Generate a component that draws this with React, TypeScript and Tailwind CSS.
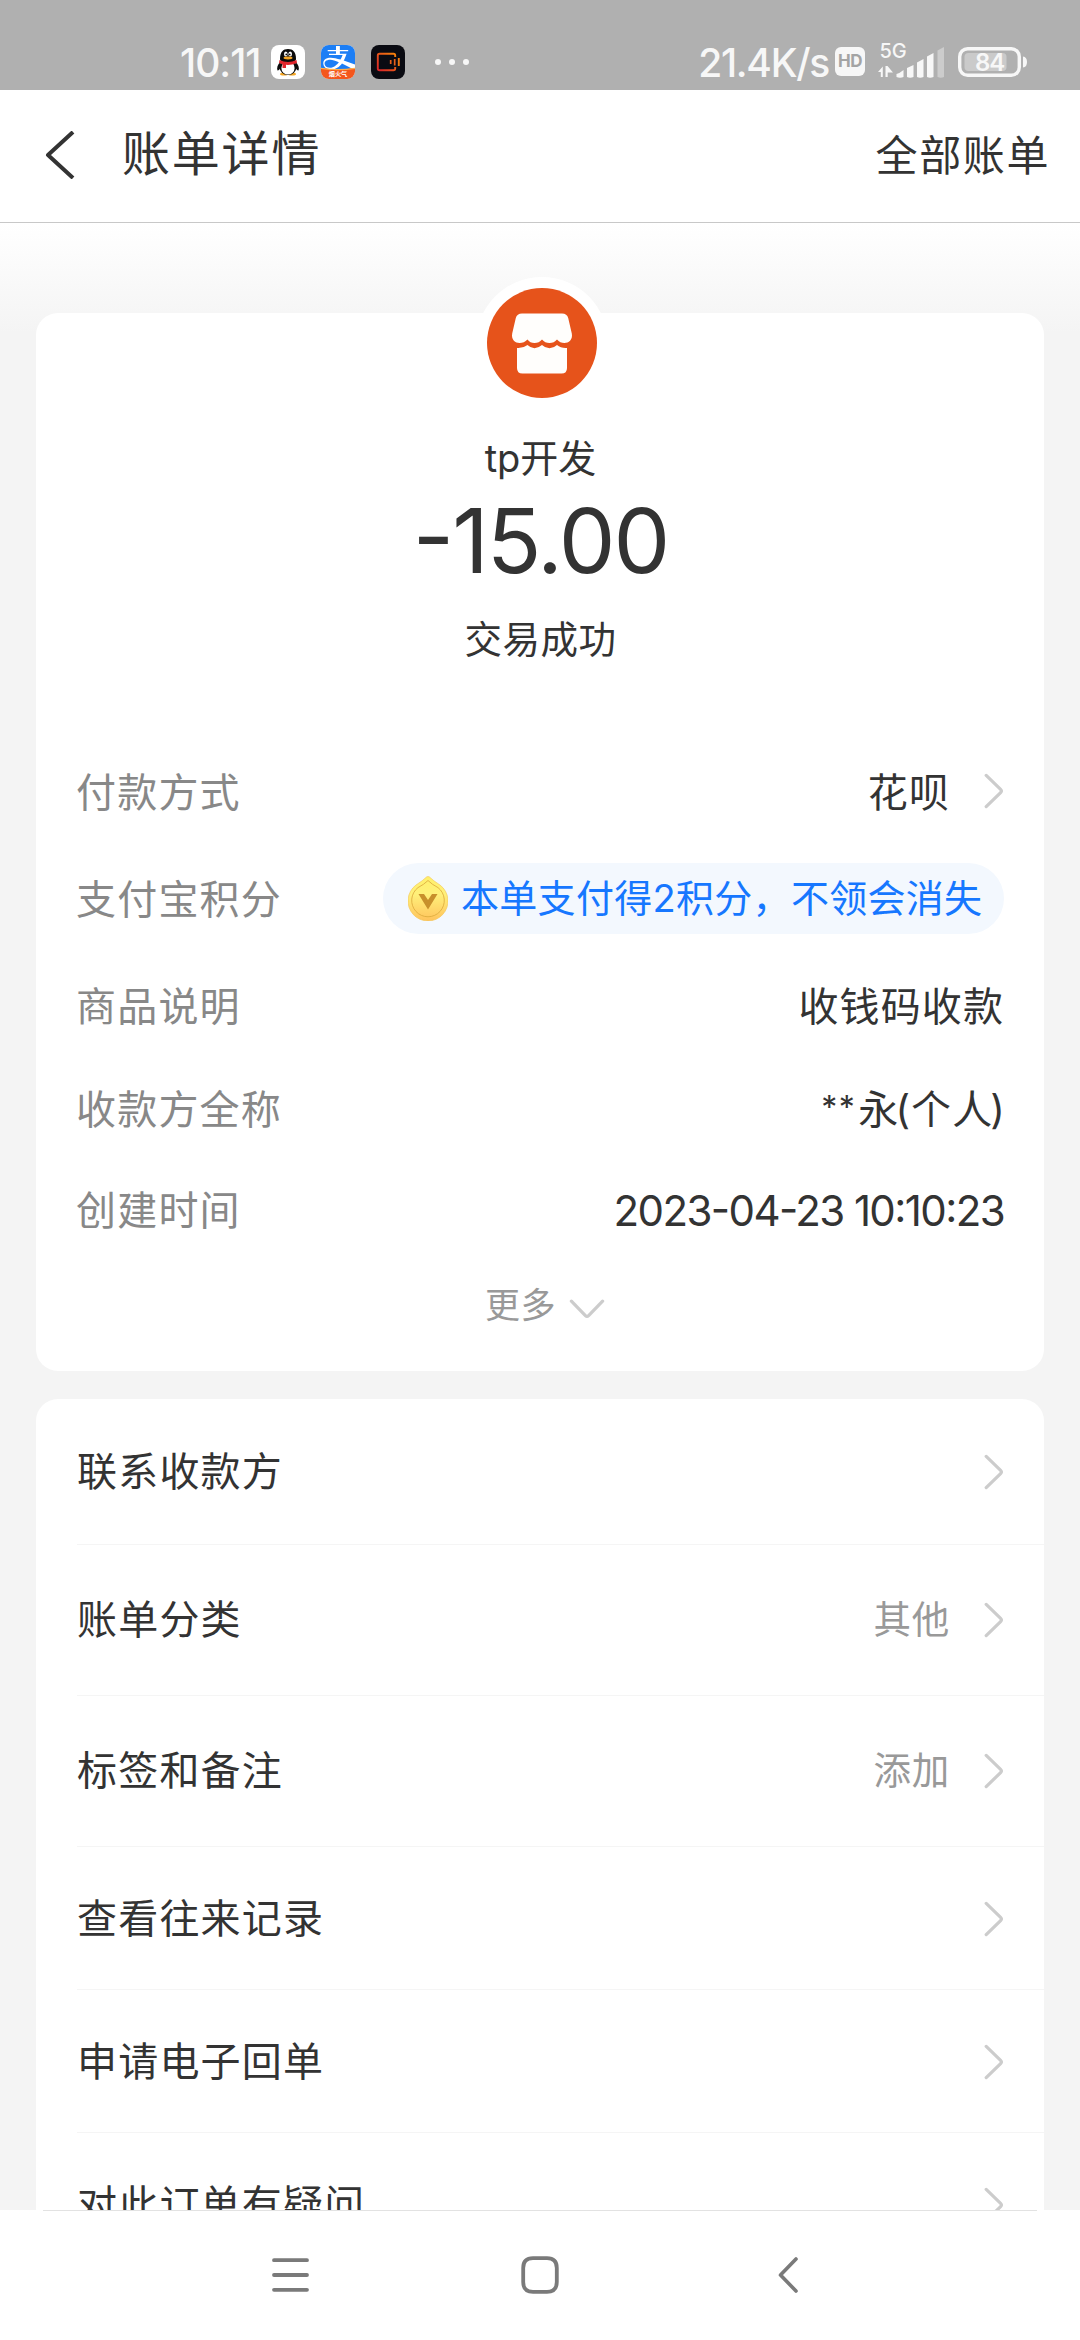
import React from 'react';
import { FaAlipay } from 'react-icons/fa';

interface DetailRowProps {
  label: string;
  height: string;
  children: React.ReactNode;
}

interface MenuItem {
  label: string;
  value?: string;
  height: string;
}

const menuItems: MenuItem[] = [
  { label: '联系收款方', height: 'h-[146px]' },
  { label: '账单分类', value: '其他', height: 'h-[151px]' },
  { label: '标签和备注', value: '添加', height: 'h-[151px]' },
  { label: '查看往来记录', height: 'h-[143px] pt-[2px]' },
  { label: '申请电子回单', height: 'h-[143px] pt-[2px]' },
  { label: '对此订单有疑问', height: 'h-[143px] pt-[2px]' },
];

const ChevronRight: React.FC = () => (
  <svg className="w-5 h-9 shrink-0" fill="none" stroke="#cccccc" viewBox="0 0 20 36">
    <path strokeLinecap="round" strokeLinejoin="round" strokeWidth="3.2" d="M2.2 2.4L16.6 16.4Q18.2 18 16.6 19.6L2.2 33.6" />
  </svg>
);

const QQIcon: React.FC = () => (
  <svg className="w-[34px] h-[34px]" viewBox="0 0 34 34">
    <rect width="34" height="34" rx="8" fill="#ffffff" />
    <ellipse cx="13" cy="29" rx="4" ry="1.6" fill="#f5a623" />
    <ellipse cx="21" cy="29" rx="4" ry="1.6" fill="#f5a623" />
    <path d="M9.5 17C6.5 19.5 5.5 23 6.5 25.5C8 25.5 9 24 9.5 22.5zM24.5 17C27.5 19.5 28.5 23 27.5 25.5C26 25.5 25 24 24.5 22.5z" fill="#0b0b0b" />
    <ellipse cx="17" cy="22" rx="8.5" ry="8" fill="#0b0b0b" />
    <ellipse cx="17" cy="23" rx="6.6" ry="6.6" fill="#ffffff" />
    <path d="M9 14C9 7 12 4 17 4S25 7 25 14C25 16.5 22 17.5 17 17.5S9 16.5 9 14z" fill="#0b0b0b" />
    <ellipse cx="14.8" cy="9" rx="1.8" ry="2.5" fill="#ffffff" />
    <ellipse cx="19.2" cy="9" rx="1.8" ry="2.5" fill="#ffffff" />
    <circle cx="15.3" cy="9.4" r="0.9" fill="#0b0b0b" />
    <circle cx="18.7" cy="9.4" r="0.9" fill="#0b0b0b" />
    <ellipse cx="17" cy="13" rx="4.5" ry="1.4" fill="#f5a623" />
    <path d="M8.5 15Q17 19 25.5 15L26 18Q20 20.3 15 19.8V23H11.5V19.3L8 18z" fill="#e0242b" />
  </svg>
);

const AlipayIcon: React.FC = () => (
  <div className="relative w-[34px] h-[34px] rounded-[8px] overflow-hidden bg-white">
    <FaAlipay className="absolute -top-[6px] left-0 w-[34px] h-[39px] text-[#1c7ef5]" />
    <svg className="absolute inset-0" viewBox="0 0 34 34">
      <path d="M0 23Q17 25.5 34 23V34H0z" fill="#f4561c" />
      <path d="M0 22.8Q17 25.3 34 22.8V24Q17 26.5 0 24z" fill="#ffb04a" />
      <text x="17" y="31" textAnchor="middle" fontSize="6.2" fontWeight="700" fill="#ffffff">烟火气</text>
    </svg>
  </div>
);

const RecorderIcon: React.FC = () => (
  <svg className="w-[34px] h-[34px]" fill="none" viewBox="0 0 34 34">
    <defs>
      <linearGradient id="recorder" x1="0" x2="1" y1="1" y2="0">
        <stop offset="0" stopColor="#d8232a" />
        <stop offset="1" stopColor="#f5820b" />
      </linearGradient>
    </defs>
    <rect width="34" height="34" rx="8" fill="#0a0b12" />
    <path d="M24.2 12V10.5Q24.2 8.8 22.5 8.8H8.5Q6.8 8.8 6.8 10.5V23.5Q6.8 25.2 8.5 25.2H22.5Q24.2 25.2 24.2 23.5V22" stroke="url(#recorder)" strokeWidth="1.9" />
    <path d="M19.7 15V19M23.7 14V20.5" stroke="#e9601a" strokeWidth="1.7" />
    <path d="M27.8 13V21" stroke="#f07a12" strokeWidth="1.9" />
  </svg>
);

const StatusBar: React.FC = () => (
  <div className="h-[90px] shrink-0 bg-[#b0b0b0] flex items-start pt-[43px] pl-[180px] pr-[52px] text-[#f7f7f7]">
    <span className="w-[91px] text-[39px] leading-[39px] font-medium tracking-[-1px]">10:11</span>
    <div className="flex gap-4 pt-[2px]">
      <QQIcon />
      <AlipayIcon />
      <RecorderIcon />
    </div>
    <div className="flex gap-2 pt-4 pl-[30px]">
      <span className="w-[6px] h-[6px] rounded-full bg-[#f7f7f7]" />
      <span className="w-[6px] h-[6px] rounded-full bg-[#f7f7f7]" />
      <span className="w-[6px] h-[6px] rounded-full bg-[#f7f7f7]" />
    </div>
    <span className="ml-auto text-[39px] leading-[39px] font-medium tracking-[-1.3px]">21.4K/s</span>
    <span className="mt-1 ml-[6px] w-[30px] h-[29px] rounded-[6px] bg-[#f7f7f7] text-[#a4a4a4] text-[17px] leading-[29px] tracking-[-0.5px] font-bold text-center">HD</span>
    {/* mobile signal */}
    <svg className="ml-[13px] -mt-[8px] w-[68px] h-[44px]" viewBox="0 -8 68 44">
      <text x="1.5" y="15" fontSize="20" fontWeight="500" fill="#f7f7f7">5G</text>
      <path d="M0 29L4.8 23.5V34H2.8V29zM7.5 34V23H9.5L15 29.5H9.7V34z" fill="#f7f7f7" />
      <path d="M18.5 34V31Q22 30 25.5 27V34Q22 35.5 18.5 34z" fill="#f7f7f7" />
      <path d="M29 34V25L35.5 22V34Q32 35.5 29 34zM39 34V19.5L45.5 16V34Q42 35.5 39 34zM49 34V13.5L55.5 10V34Q52 35.5 49 34z" fill="#f7f7f7" />
      <path d="M59.5 34V7.5L66 4V34Q63 35.5 59.5 34z" fill="#cccccc" />
    </svg>
    {/* battery */}
    <svg className="ml-3 w-[70px] h-[36px]" viewBox="0 0 70 36">
      <rect x="1.7" y="5.7" width="59.6" height="26.6" rx="8" fill="none" stroke="#f7f7f7" strokeWidth="3.4" />
      <rect x="6.5" y="10" width="42" height="18" rx="4" fill="#cacaca" />
      <path d="M65 13.5Q69 14 69 19T65 24.5z" fill="#f7f7f7" />
      <text x="31.5" y="28" textAnchor="middle" fontSize="24" fontWeight="600" letterSpacing="-1.2" fill="#f7f7f7">84</text>
    </svg>
  </div>
);

const DetailRow: React.FC<DetailRowProps> = ({ label, height, children }) => (
  <div className={`${height} flex items-center justify-between pt-[2px]`}>
    <span className="text-[40px] tracking-[1.2px] text-[#888888]">{label}</span>
    <div className="flex items-center text-[40px] tracking-[1.1px]">{children}</div>
  </div>
);

const PointsPill: React.FC = () => (
  <div className="h-[71px] w-[621px] mb-[2px] rounded-full bg-[#f3f8fe] flex items-center pl-[25px]">
    <svg className="w-10 h-[45px]" viewBox="0 0 40 45">
      <defs>
        <linearGradient id="coin" x1="0" x2="0" y1="0" y2="1">
          <stop offset="0" stopColor="#fff06a" />
          <stop offset="0.4" stopColor="#fff07a" />
          <stop offset="1" stopColor="#ffc35c" />
        </linearGradient>
      </defs>
      <path d="M18.5 1Q20 0 21.5 1Q25 4.5 32 9A20 20 0 1 1 8 9Q15 4.5 18.5 1z" fill="url(#coin)" stroke="#f3c450" strokeWidth="0.6" />
      <path d="M20 4.5Q24 8.5 30 11.6A16.3 16.3 0 1 1 10 11.6Q16 8.5 20 4.5z" fill="none" stroke="#dfae3f" strokeWidth="0.9" />
      <path d="M10.5 18H16L20 24L24 18H29.5L20 33.5z" fill="#c8902c" />
    </svg>
    <span className="ml-[13px] text-[38px] leading-[56px] tracking-[0.3px] text-[#1677ff] whitespace-nowrap pb-[2px]">
      本单支付得2积分，不领会消失
    </span>
  </div>
);

const App: React.FC = () => {
  return (
    <div className="w-[1080px] h-[2340px] flex flex-col overflow-hidden bg-white text-[#333333] font-['Inter','Noto_Sans_CJK_SC',sans-serif]">
      <StatusBar />

      {/* Title bar */}
      <header className="h-[133px] shrink-0 border-b border-[#c8c8c8] flex items-center pl-[45px] pr-[30px]">
        <svg className="w-[30px] h-[48px] mb-[2px]" fill="none" stroke="currentColor" viewBox="0 0 30 48">
          <path strokeLinejoin="round" strokeWidth="4" d="M28 1L3 24L28 47" />
        </svg>
        <h1 className="ml-[47px] text-[48px] tracking-[1.8px] pb-[5px]">账单详情</h1>
        <span className="ml-auto text-[42px] tracking-[1.6px] pb-[2px]">全部账单</span>
      </header>

      <main className="flex-1 min-h-0 overflow-hidden bg-[#f4f4f4] bg-[linear-gradient(#ffffff,#f4f4f4_110px)] px-9 pt-[90px]">
        {/* Bill summary */}
        <section className="h-[1058px] bg-white rounded-[22px] pl-10 pr-[40px]">
          <div className="h-[427px] flex flex-col items-center pl-px">
            <div className="-mt-[36px] w-[132px] h-[132px] shrink-0 rounded-full bg-white p-[11px] ml-[2px]">
              <svg className="w-[110px] h-[110px]" viewBox="0 0 110 110">
                <circle cx="55" cy="55" r="55" fill="#e6531b" />
                <path d="M35 25.5H75Q80 25.5 81.2 30L84.8 45.5C86 52 81.5 55 77.5 55Q73 55 70 51.5Q67 55 62.5 55T55 51.5Q52 55 47.5 55T40.5 51.5Q37 55 32.5 55C28.5 55 24 52 25.2 45.5L28.8 30Q30 25.5 35 25.5z" fill="#fffefc" />
                <path d="M30 60Q36 60.5 40.5 57Q44 60.3 47.5 60.3T55 57Q58.5 60.3 62.5 60.3T70 57Q74 60.5 80 60V80Q80 85.5 74.5 85.5H35.5Q30 85.5 30 80z" fill="#fffefc" />
              </svg>
            </div>
            <div className="mt-[24px] h-[50px] text-[38px] leading-[50px]">tp开发</div>
            <div className="mt-[8px] h-[100px] text-[90px] leading-[100px] tracking-[-2px] [font-feature-settings:'case']">-15.00</div>
            <div className="mt-[24px] h-[50px] text-[37.5px] leading-[50px] tracking-[0.5px]">交易成功</div>
          </div>

          <DetailRow label="付款方式" height="h-[104px]">
            <span>花呗</span>
            <span className="ml-[34px] mb-[5px]"><ChevronRight /></span>
          </DetailRow>
          <DetailRow label="支付宝积分" height="h-[109px]">
            <PointsPill />
          </DetailRow>
          <DetailRow label="商品说明" height="h-[106px]">收钱码收款</DetailRow>
          <DetailRow label="收款方全称" height="h-[99px]">
            <span className="text-[32px] tracking-[1.5px] mr-[2px] pb-1">**</span>
            <span>永</span>
            <span className="-ml-1">(</span>
            <span>个人</span>
            <span className="-ml-[3px] -mr-[2px]">)</span>
          </DetailRow>
          <DetailRow label="创建时间" height="h-[103px]">
            <span className="text-[42px] tracking-[-1.6px] [font-feature-settings:'case']">2023-04-23 10:10:23</span>
          </DetailRow>

          <div className="h-[89px] flex items-center justify-center pl-[10px] text-[35px] tracking-[0.5px] text-[#999999]">
            更多
            <svg className="ml-[13px] mt-[6px] w-9 h-5" fill="none" stroke="#cccccc" viewBox="0 0 36 20">
              <path strokeLinecap="round" strokeLinejoin="round" strokeWidth="3.2" d="M2.4 2.2L16.4 16.6Q18 18.2 19.6 16.6L33.6 2.2" />
            </svg>
          </div>
        </section>

        {/* Bill actions */}
        <section className="mt-7 bg-white rounded-t-[22px] pl-[41px]">
          {menuItems.map((item) => (
            <div
              key={item.label}
              className={`${item.height} border-b border-[#f5f5f5] flex items-center pr-10`}
            >
              <span className="text-[40px] tracking-[1.2px]">{item.label}</span>
              {item.value && (
                <span className="ml-auto mr-[34px] text-[37.5px] tracking-[0.8px] text-[#999999]">{item.value}</span>
              )}
              <span className={item.value ? '' : 'ml-auto'}><ChevronRight /></span>
            </div>
          ))}
        </section>
      </main>

      {/* System navigation */}
      <nav className="h-[130px] shrink-0 bg-white px-[43px]">
        <div className="h-px bg-[#e2e2e2]" />
        <div className="h-[128px] flex items-center pl-[228px]">
          <svg className="w-[38px] h-[38px]" viewBox="0 0 38 38">
            <path stroke="#7a7a7a" strokeWidth="3.8" strokeLinecap="round" d="M3 4.2H36M3 19H36M3 33.8H36" />
          </svg>
          <svg className="ml-[212px] w-[38px] h-[38px]" fill="none" viewBox="0 0 38 38">
            <path stroke="#7a7a7a" strokeWidth="3.8" d="M12 2.2H26Q35.8 2.2 35.8 12V26Q35.8 35.8 26 35.8H12Q2.2 35.8 2.2 26V12Q2.2 2.2 12 2.2z" />
          </svg>
          <svg className="ml-[219px] w-5 h-[38px]" fill="none" viewBox="0 0 20 38">
            <path stroke="#7a7a7a" strokeWidth="3.6" strokeLinecap="round" strokeLinejoin="round" d="M18 3L2.5 19L18 35" />
          </svg>
        </div>
      </nav>
    </div>
  );
};

export default App;
